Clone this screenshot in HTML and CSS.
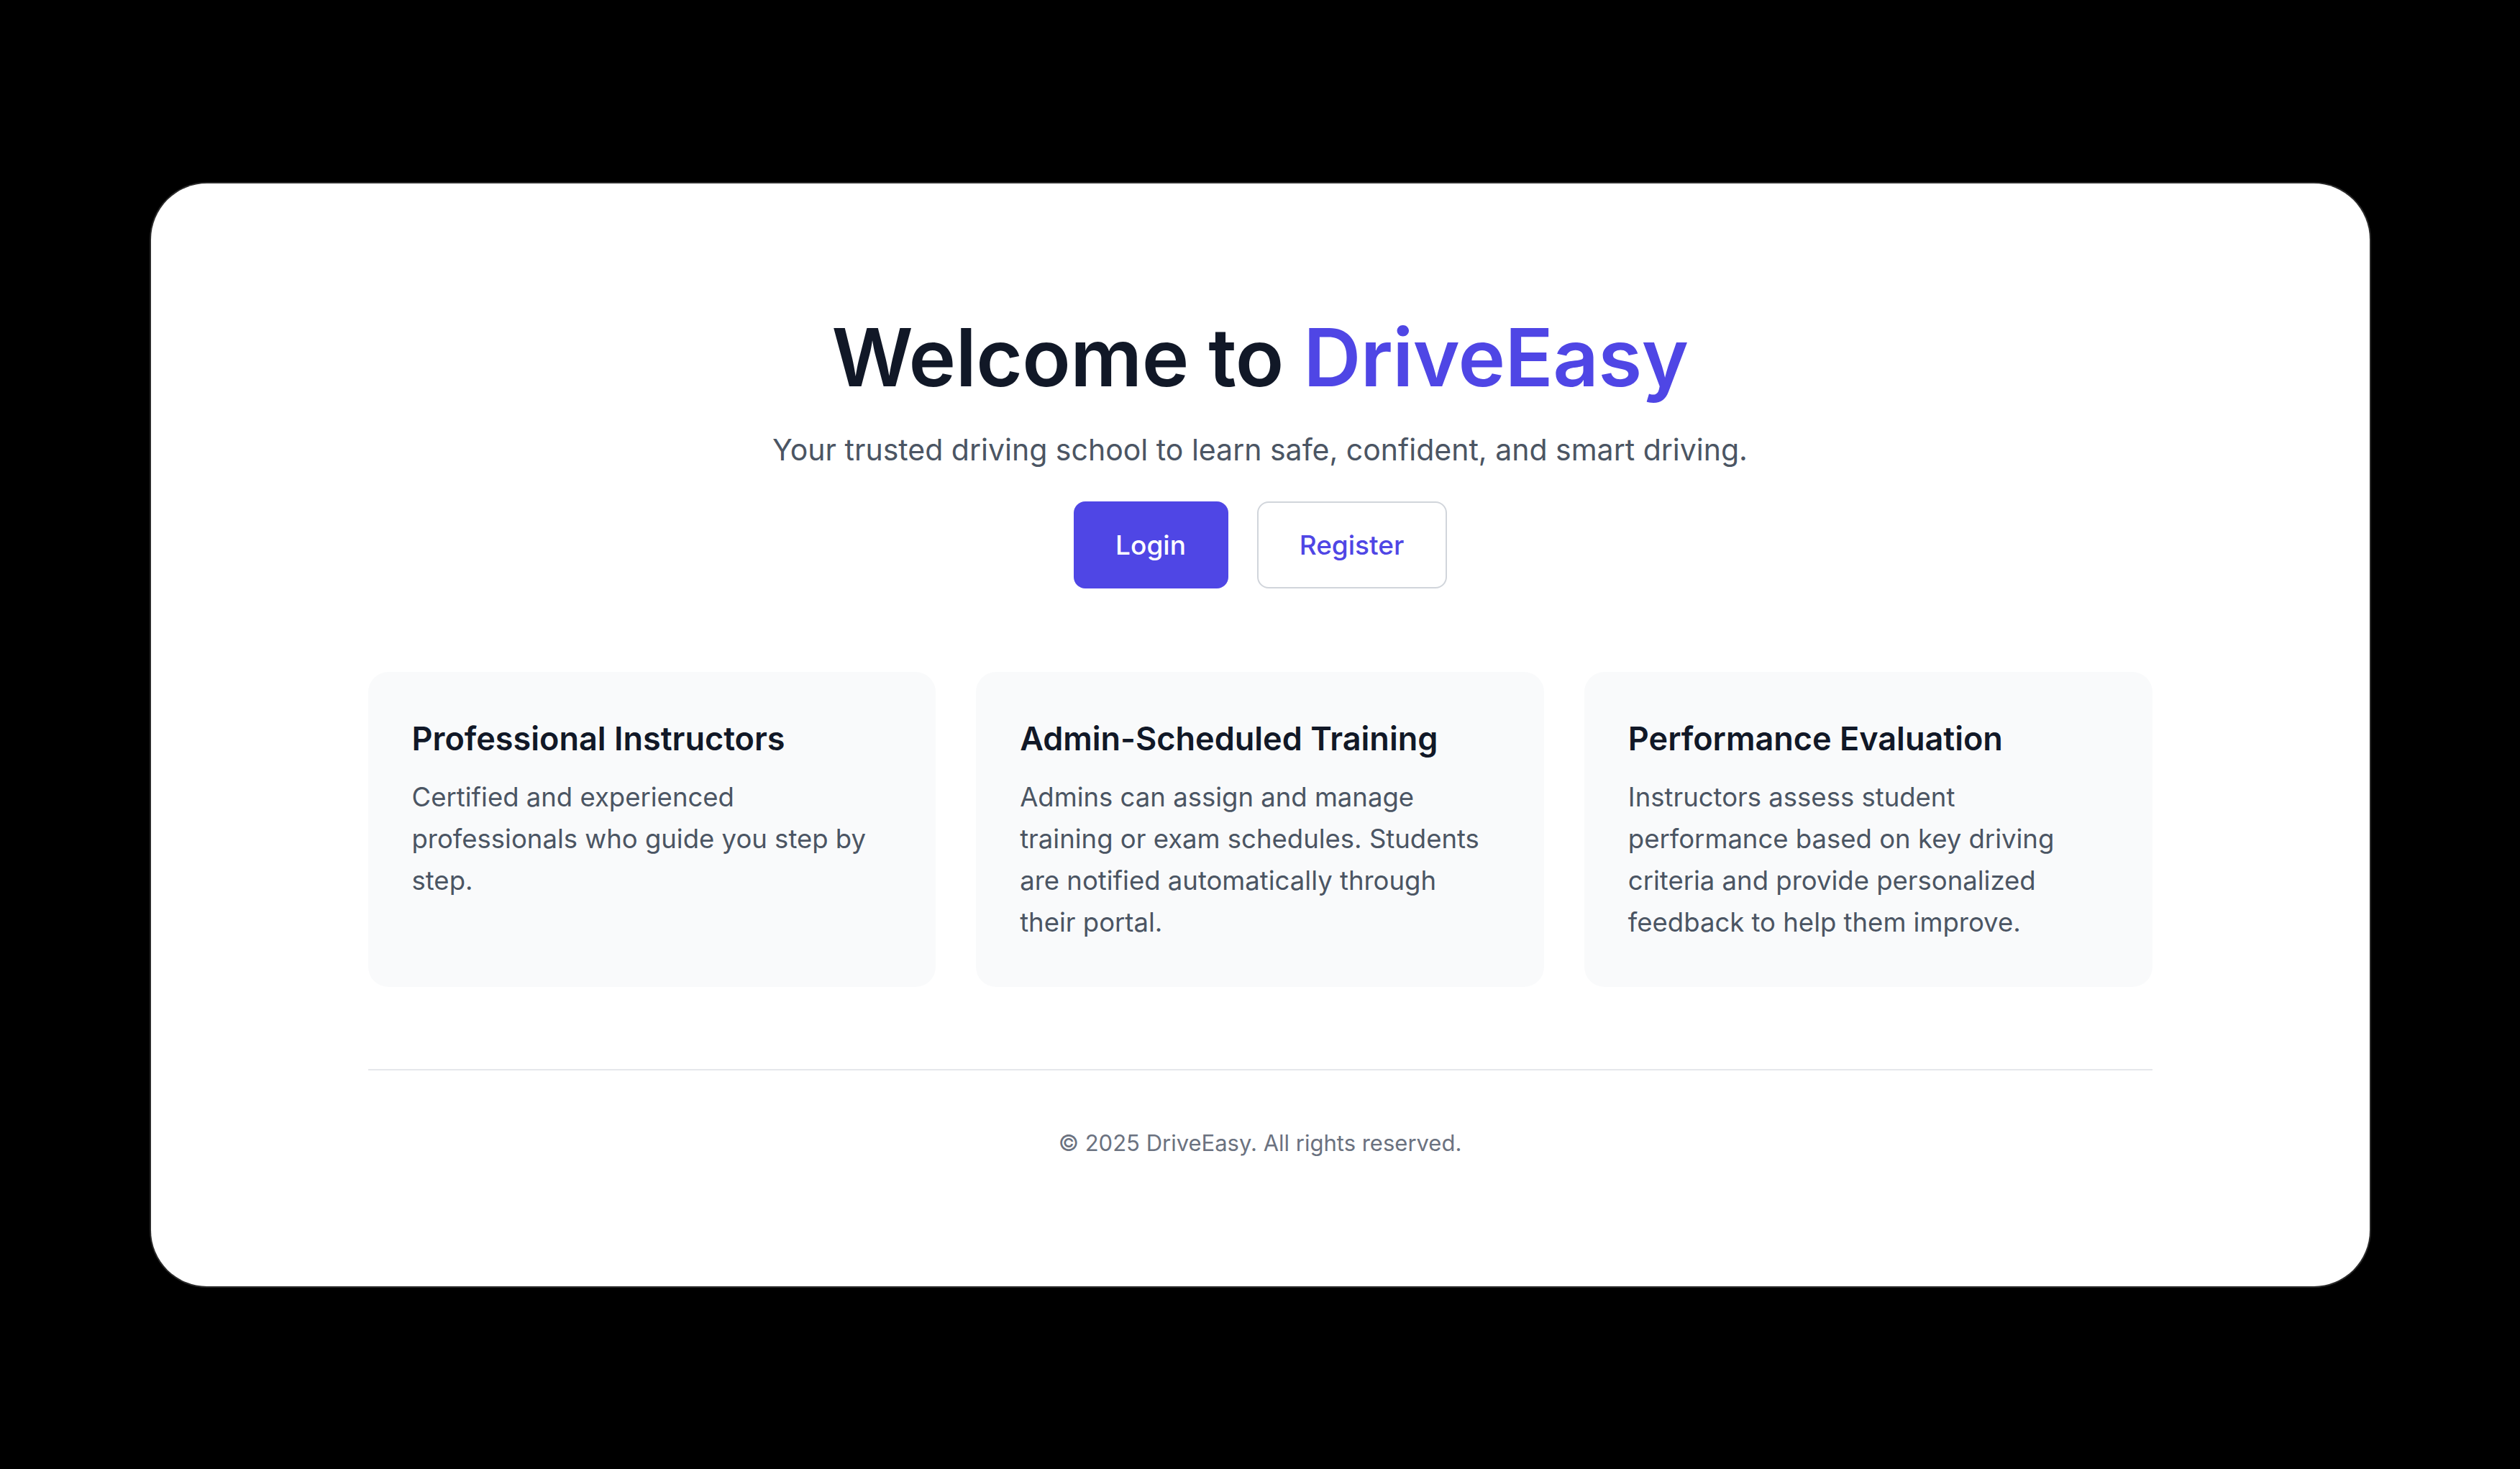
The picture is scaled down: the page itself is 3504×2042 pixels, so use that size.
FILE: index.html
```html
<!DOCTYPE html>
<html lang="en">
<head>
<meta charset="utf-8">
<title>DriveEasy</title>
<link rel="stylesheet" href="styles.css">
</head>
<body>
<main class="frame">
  <div class="content">
    <section class="hero">
      <h1 class="title">Welcome to <span class="brand">DriveEasy</span></h1>
      <p class="subtitle">Your trusted driving school to learn safe, confident, and smart driving.</p>
      <div class="actions">
        <a class="btn btn-primary" href="#">Login</a>
        <a class="btn btn-outline" href="#">Register</a>
      </div>
    </section>
    <section class="features">
      <div class="feature">
        <h3 class="feature-title">Professional Instructors</h3>
        <p class="feature-text">Certified and experienced professionals who guide you step by step.</p>
      </div>
      <div class="feature">
        <h3 class="feature-title">Admin-Scheduled Training</h3>
        <p class="feature-text">Admins can assign and manage training or exam schedules. Students are notified automatically through their portal.</p>
      </div>
      <div class="feature">
        <h3 class="feature-title">Performance Evaluation</h3>
        <p class="feature-text">Instructors assess student performance based on key driving criteria and provide personalized feedback to help them improve.</p>
      </div>
    </section>
    <footer class="footer">
      <p class="copy">© 2025 DriveEasy. All rights reserved.</p>
    </footer>
  </div>
</main>
</body>
</html>
```

FILE: styles.css
```css
* { box-sizing: border-box; }
html, body { margin: 0; padding: 0; }
body {
  background: #000;
  min-height: 100vh;
  display: flex;
  align-items: center;
  justify-content: center;
  font-family: Inter, "Noto Sans", "Liberation Sans", sans-serif;
  color: #111827;
}
.frame {
  width: 3085px;
  height: 1533px;
  background: #fff;
  border-radius: 78px;
  box-shadow: 0 0 0 2px #2a2a2a;
  display: flex;
  justify-content: center;
}
.content {
  width: 2481px;
  padding-top: 188px;
}
.hero {
  display: flex;
  flex-direction: column;
  align-items: center;
}
.title {
  margin: 0;
  font-size: 111px;
  line-height: 108px;
  font-weight: 600;
  letter-spacing: -0.005em;
  color: #111827;
}
.brand { color: #4f46e5; }
.subtitle {
  margin: 44px 0 0;
  font-size: 41px;
  line-height: 61px;
  color: #4b5563;
}
.actions {
  margin-top: 41px;
  display: flex;
  gap: 40px;
}
.btn {
  height: 121px;
  display: flex;
  align-items: center;
  justify-content: center;
  border-radius: 16px;
  font-size: 37px;
  font-weight: 500;
  text-decoration: none;
}
.btn-primary {
  width: 215px;
  background: #4f46e5;
  color: #fff;
}
.btn-outline {
  width: 264px;
  background: #fff;
  color: #4f46e5;
  border: 2px solid #d1d5db;
}
.features {
  margin-top: 116px;
  display: grid;
  grid-template-columns: repeat(3, 1fr);
  gap: 56px;
}
.feature {
  background: #f9fafb;
  border-radius: 28px;
  padding: 61px 75px 61px 61px;
  min-height: 438px;
}
.feature-title {
  margin: 0;
  font-size: 45px;
  line-height: 63px;
  font-weight: 600;
  color: #111827;
}
.feature-text {
  margin: 21px 0 0;
  font-size: 36.5px;
  line-height: 58px;
  color: #4b5563;
}
.footer {
  margin-top: 114px;
  border-top: 2px solid #e5e7eb;
  padding-top: 77px;
  text-align: center;
}
.copy {
  margin: 0;
  font-size: 31px;
  line-height: 47px;
  color: #6b7280;
}
```
